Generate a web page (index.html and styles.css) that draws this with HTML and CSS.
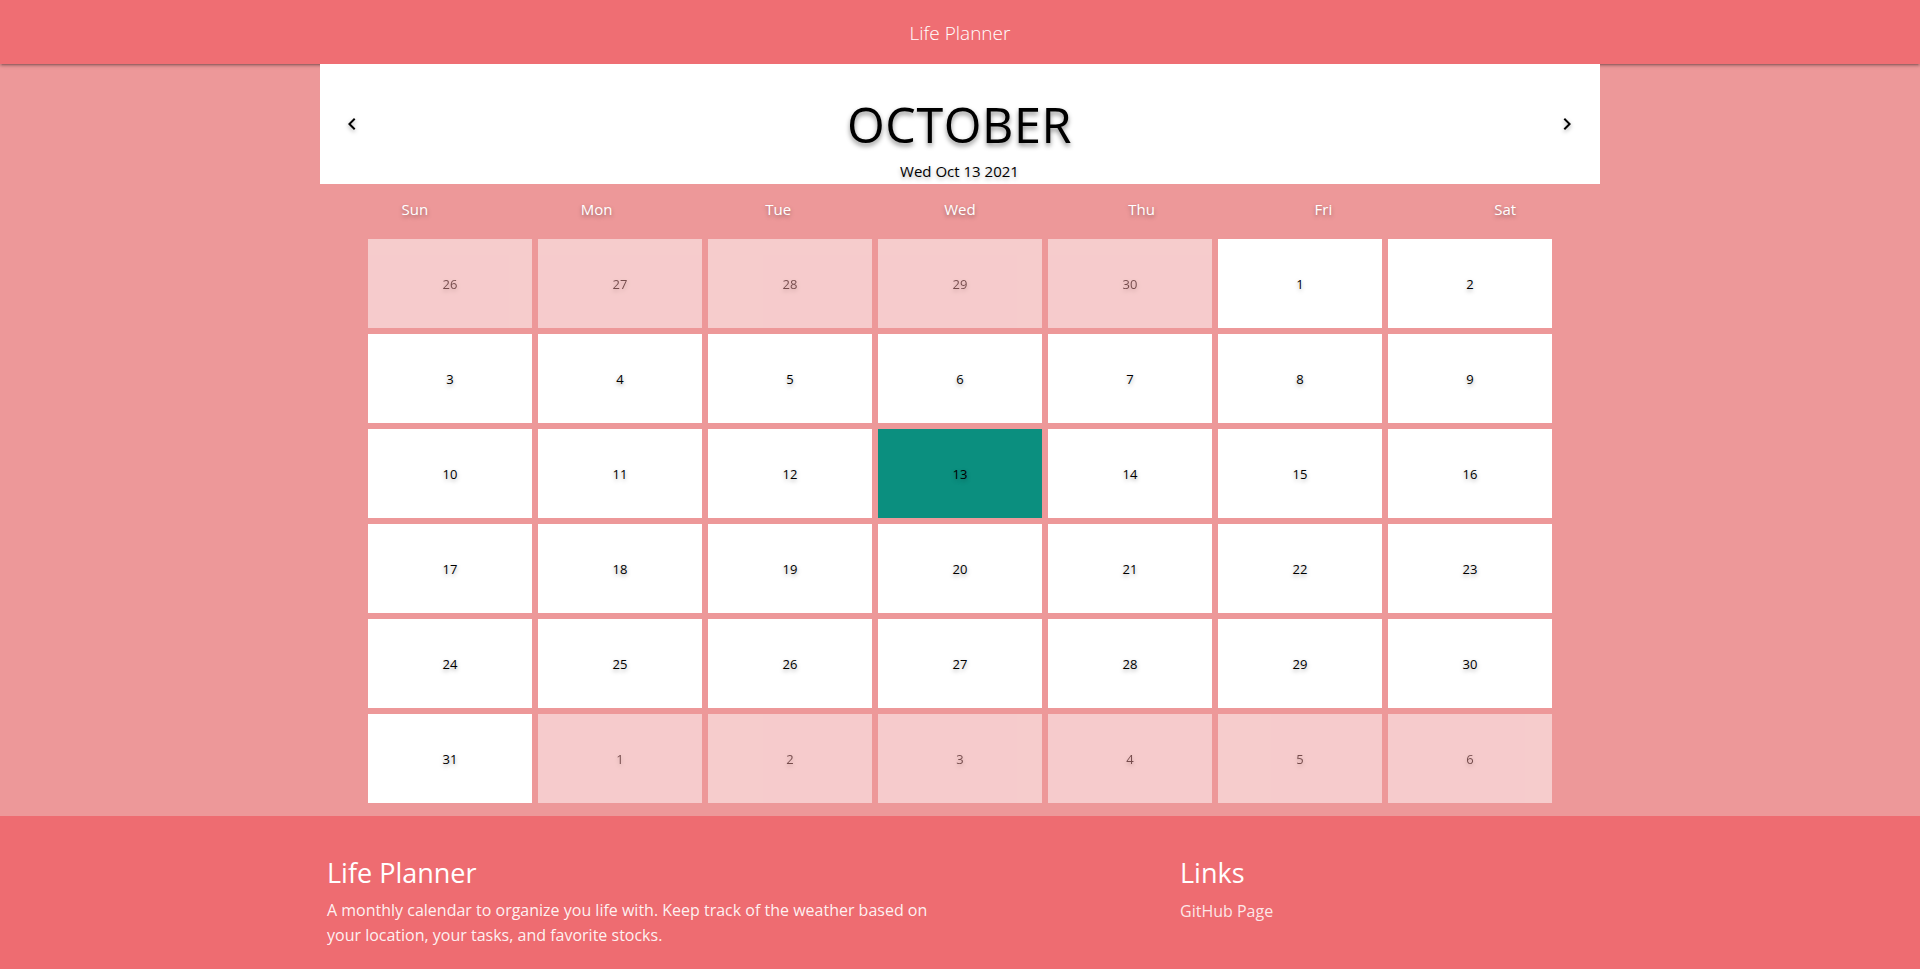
FILE: index.html
```html
<!DOCTYPE html>
<html lang="en">
<head>
<meta charset="utf-8">
<title>Life Planner</title>
<link rel="stylesheet" href="styles.css">
</head>
<body>
<header class="topbar"><span class="brand">Life Planner</span></header>
<main class="calendar">
  <section class="month-box">
    <button class="nav-btn nav-prev" aria-label="Previous month">
      <svg viewBox="0 0 24 24" width="24" height="24"><path d="M15.41 7.41L14 6l-6 6 6 6 1.41-1.41L10.83 12z"/></svg>
    </button>
    <div class="month-title">
      <h1 class="month-name">OCTOBER</h1>
      <div class="month-date">Wed Oct 13 2021</div>
    </div>
    <button class="nav-btn nav-next" aria-label="Next month">
      <svg viewBox="0 0 24 24" width="24" height="24"><path d="M10 6L8.59 7.41 13.17 12l-4.58 4.59L10 18l6-6z"/></svg>
    </button>
  </section>
  <div class="weekdays">
    <span>Sun</span><span>Mon</span><span>Tue</span><span>Wed</span><span>Thu</span><span>Fri</span><span>Sat</span>
  </div>
  <div class="days">
    <div class="day other">26</div><div class="day other">27</div><div class="day other">28</div><div class="day other">29</div><div class="day other">30</div><div class="day">1</div><div class="day">2</div>
    <div class="day">3</div><div class="day">4</div><div class="day">5</div><div class="day">6</div><div class="day">7</div><div class="day">8</div><div class="day">9</div>
    <div class="day">10</div><div class="day">11</div><div class="day">12</div><div class="day today">13</div><div class="day">14</div><div class="day">15</div><div class="day">16</div>
    <div class="day">17</div><div class="day">18</div><div class="day">19</div><div class="day">20</div><div class="day">21</div><div class="day">22</div><div class="day">23</div>
    <div class="day">24</div><div class="day">25</div><div class="day">26</div><div class="day">27</div><div class="day">28</div><div class="day">29</div><div class="day">30</div>
    <div class="day">31</div><div class="day other">1</div><div class="day other">2</div><div class="day other">3</div><div class="day other">4</div><div class="day other">5</div><div class="day other">6</div>
  </div>
</main>
<footer class="page-footer">
  <div class="footer-inner">
    <div class="footer-col">
      <h5 class="footer-title">Life Planner</h5>
      <p class="footer-text">A monthly calendar to organize you life with. Keep track of the weather based on your location, your tasks, and favorite stocks.</p>
    </div>
    <div class="footer-col">
      <h5 class="footer-title">Links</h5>
      <a class="footer-link" href="#">GitHub Page</a>
    </div>
  </div>
</footer>
</body>
</html>
```
FILE: styles.css
```css
* { box-sizing: border-box; }
html, body { margin: 0; padding: 0; }
body {
  background: #ed9899;
  font-family: "Open Sans", "Noto Sans", sans-serif;
  color: #000;
}
.topbar {
  height: 64px;
  background: #ef6e73;
  display: flex;
  align-items: center;
  justify-content: center;
  box-shadow: 0 2px 2px 0 rgba(0,0,0,0.14), 0 3px 1px -2px rgba(0,0,0,0.12), 0 1px 5px 0 rgba(0,0,0,0.2);
}
.brand {
  color: #fff;
  font-size: 19px;
  font-weight: 300;
  line-height: 24px;
  padding-top: 2px;
}
.calendar {
  width: 1280px;
  margin: 0 auto;
  padding-bottom: 13px;
}
.month-box {
  background: #fff;
  height: 120px;
  display: flex;
  align-items: stretch;
}
.nav-btn {
  background: none;
  border: 0;
  padding: 0;
  margin: 0;
  align-self: center;
  width: 24px;
  height: 24px;
  cursor: pointer;
  filter: drop-shadow(0 2px 2px rgba(0,0,0,0.35));
}
.nav-btn svg { display: block; fill: #000; }
.nav-prev { margin-left: 20px; }
.nav-next { margin-right: 21px; }
.month-title {
  flex: 1;
  text-align: center;
  padding-top: 30px;
}
.month-name {
  margin: 0;
  font-size: 48.5px;
  font-weight: 400;
  line-height: 60px;
  letter-spacing: 0.6px;
  text-shadow: 0 3px 5px rgba(0,0,0,0.45);
}
.month-date {
  margin-top: 7px;
  font-size: 15px;
  line-height: 20px;
  text-shadow: 0 2px 4px rgba(0,0,0,0.3);
}
.weekdays {
  display: grid;
  grid-template-columns: repeat(7, 1fr);
  padding: 15px 4px 20px;
  color: #fff;
  font-size: 15px;
  font-weight: 500;
  line-height: 20px;
  text-align: center;
  text-shadow: 0 2px 4px rgba(0,0,0,0.35);
}
.days {
  display: grid;
  grid-template-columns: repeat(7, 164px);
  grid-auto-rows: 89px;
  column-gap: 6px;
  row-gap: 6px;
  width: 1184px;
  margin: 0 auto;
}
.day {
  background: #fff;
  display: flex;
  align-items: center;
  justify-content: center;
  font-size: 13px;
  line-height: 18px;
  text-shadow: 0 2px 4px rgba(0,0,0,0.35);
}
.day.other { opacity: 0.5; }
.day.today { background: #0b8f7f; }
.page-footer {
  background: #ee6c71;
  height: 153px;
  color: #fff;
}
.footer-inner {
  width: 1280px;
  margin: 0 auto;
  padding: 40px 0 0 7px;
  display: grid;
  grid-template-columns: 853px 1fr;
}
.footer-title {
  margin: 0;
  font-size: 27px;
  font-weight: 400;
  line-height: 34px;
}
.footer-text {
  margin: 8px 0 0;
  max-width: 612px;
  font-size: 16px;
  line-height: 25px;
  color: rgba(255,255,255,0.92);
}
.footer-link {
  display: block;
  margin-top: 9px;
  font-size: 16px;
  line-height: 24px;
  color: rgba(255,255,255,0.85);
  text-decoration: none;
}
```
